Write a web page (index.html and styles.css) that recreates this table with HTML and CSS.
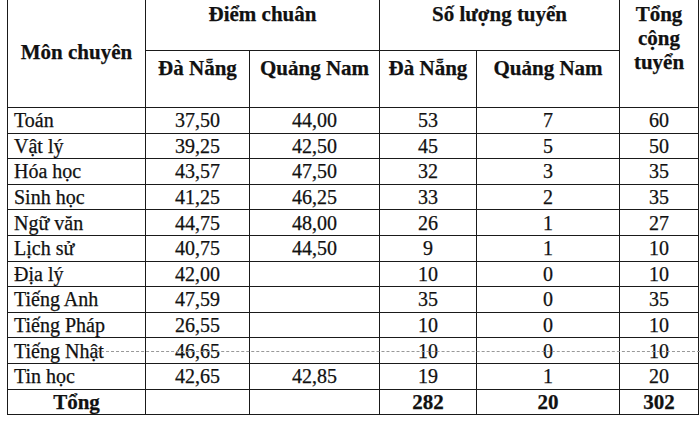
FILE: index.html
```html
<!DOCTYPE html>
<html lang="vi">
<head>
<meta charset="utf-8">
<title>Điểm chuẩn</title>
<link rel="stylesheet" href="styles.css">
</head>
<body>
<div class="wrap">
<table class="score">
  <colgroup>
    <col class="c1"><col class="c2"><col class="c3"><col class="c4"><col class="c5"><col class="c6">
  </colgroup>
  <thead>
    <tr class="h1">
      <th rowspan="2" class="mon">Môn chuyên</th>
      <th colspan="2" class="grp">Điểm chuân</th>
      <th colspan="2" class="grp">Số lượng tuyển</th>
      <th rowspan="2" class="tong">Tổng<br>cộng<br>tuyển</th>
    </tr>
    <tr class="h2">
      <th class="sub">Đà Nẵng</th>
      <th class="sub">Quảng Nam</th>
      <th class="sub">Đà Nẵng</th>
      <th class="sub">Quảng Nam</th>
    </tr>
  </thead>
  <tbody>
    <tr><td class="name">Toán</td><td>37,50</td><td>44,00</td><td>53</td><td>7</td><td>60</td></tr>
    <tr><td class="name">Vật lý</td><td>39,25</td><td>42,50</td><td>45</td><td>5</td><td>50</td></tr>
    <tr><td class="name">Hóa học</td><td>43,57</td><td>47,50</td><td>32</td><td>3</td><td>35</td></tr>
    <tr><td class="name">Sinh học</td><td>41,25</td><td>46,25</td><td>33</td><td>2</td><td>35</td></tr>
    <tr><td class="name">Ngữ văn</td><td>44,75</td><td>48,00</td><td>26</td><td>1</td><td>27</td></tr>
    <tr><td class="name">Lịch sử</td><td>40,75</td><td>44,50</td><td>9</td><td>1</td><td>10</td></tr>
    <tr><td class="name">Địa lý</td><td>42,00</td><td></td><td>10</td><td>0</td><td>10</td></tr>
    <tr><td class="name">Tiếng Anh</td><td>47,59</td><td></td><td>35</td><td>0</td><td>35</td></tr>
    <tr><td class="name">Tiếng Pháp</td><td>26,55</td><td></td><td>10</td><td>0</td><td>10</td></tr>
    <tr><td class="name">Tiếng Nhật</td><td>46,65</td><td></td><td>10</td><td>0</td><td>10</td></tr>
    <tr><td class="name">Tin học</td><td>42,65</td><td>42,85</td><td>19</td><td>1</td><td>20</td></tr>
    <tr class="total"><td>Tổng</td><td></td><td></td><td>282</td><td>20</td><td>302</td></tr>
  </tbody>
</table>
<div class="scanline"></div>
</div>
</body>
</html>
```
FILE: styles.css
```css
html, body {
  margin: 0;
  padding: 0;
  background: #fff;
}
.wrap {
  position: relative;
  width: 700px;
  height: 423px;
  overflow: hidden;
}
.score {
  margin-left: 7px;
  margin-top: -1px;
  border-collapse: collapse;
  table-layout: fixed;
  width: 691px;
  font-family: "Liberation Serif", "Times New Roman", serif;
  color: #111;
  -webkit-text-stroke: 0.25px #111;
}
.c1 { width: 138px; }
.c2 { width: 104px; }
.c3 { width: 130px; }
.c4 { width: 97px; }
.c5 { width: 143px; }
.c6 { width: 79px; }
.score th, .score td {
  border: 1.5px solid #1a1a1a;
  padding: 0;
}
.score th {
  font-weight: bold;
  font-size: 21px;
  text-align: center;
  vertical-align: top;
}
.h1 { height: 51px; }
.h2 { height: 57px; }
.score .mon {
  vertical-align: middle;
  padding-bottom: 2px;
}
.score .grp {
  padding-top: 2px;
}
.score .sub {
  padding-top: 5px;
  white-space: nowrap;
}
.score .tong {
  line-height: 24px;
  padding-top: 2px;
}
.score td {
  font-size: 20px;
  text-align: center;
  vertical-align: middle;
  height: 24.6px;
  line-height: 22px;
}
.score td.name {
  text-align: left;
  padding-left: 6px;
}
.total td {
  font-weight: bold;
  font-size: 21px;
}
.scanline {
  position: absolute;
  left: 96px;
  right: 0;
  top: 351px;
  border-top: 1px dashed #999;
}
```
